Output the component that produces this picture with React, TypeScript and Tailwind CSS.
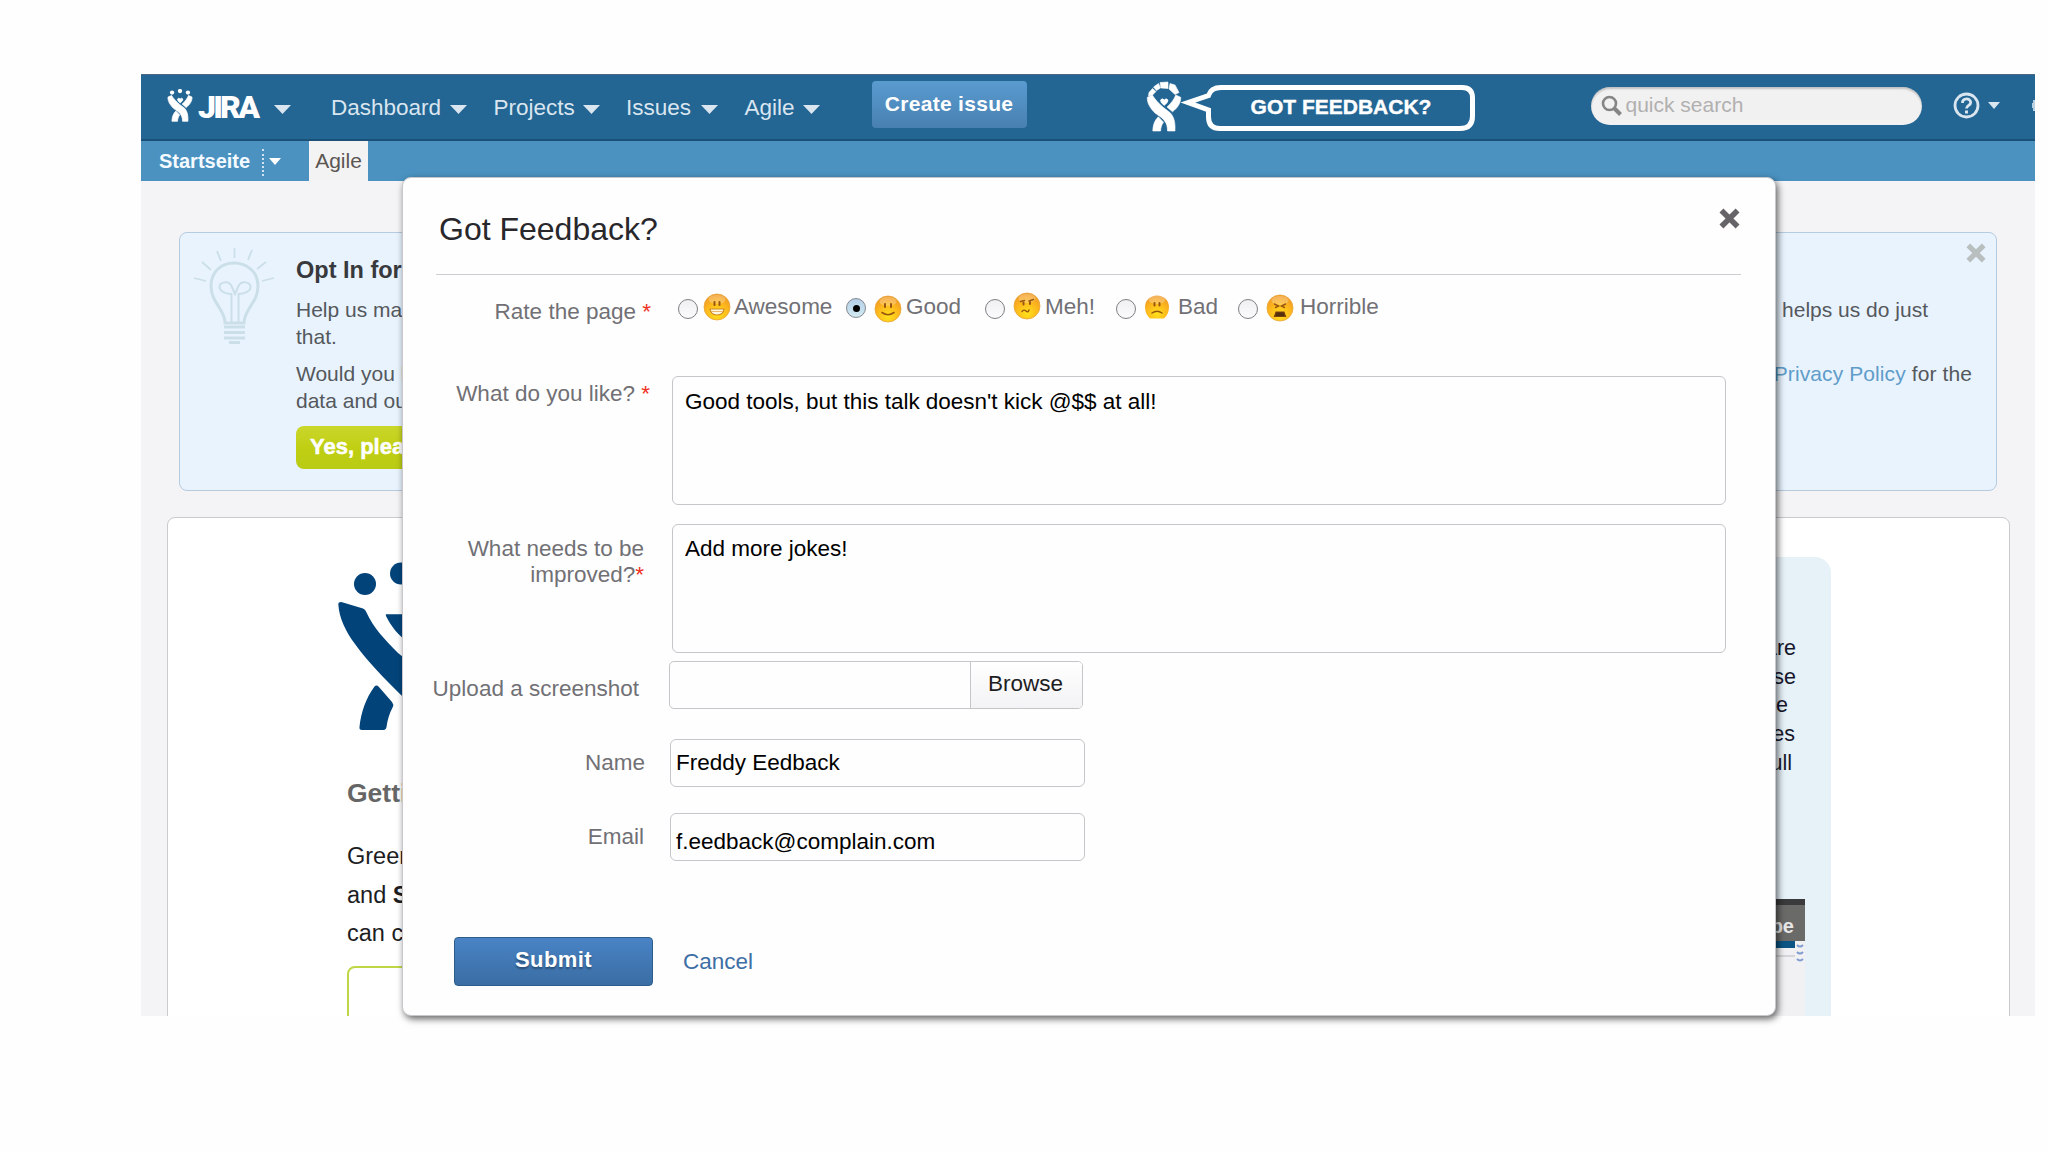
import type { ReactNode } from 'react';
import clsx from 'clsx';

type Mood = 'awesome' | 'good' | 'meh' | 'bad' | 'horrible';

const navItems = [
    { label: 'Dashboard', width: 'w-[119px]' },
    { label: 'Projects', width: 'w-[89px]' },
    { label: 'Issues', width: 'w-[75px]' },
    { label: 'Agile', width: 'w-[58px]' },
];

const ratings: { mood: Mood; label: string; item: string; face: string; text: string }[] = [
    { mood: 'awesome', label: 'Awesome', item: 'w-[168px]', face: 'ml-[5px] mt-0', text: 'ml-[3px]' },
    { mood: 'good', label: 'Good', item: 'w-[139px]', face: 'ml-[8px] mt-[2px]', text: 'ml-[4px]' },
    { mood: 'meh', label: 'Meh!', item: 'w-[131px]', face: 'ml-[8px] -mt-px', text: 'ml-[4px]' },
    { mood: 'bad', label: 'Bad', item: 'w-[122px]', face: 'ml-[7px] mt-0', text: 'ml-[7px]' },
    { mood: 'horrible', label: 'Horrible', item: 'w-[160px]', face: 'ml-[8px] mt-px', text: 'ml-[6px]' },
];

function Caret({ className }: { className?: string }) {
    return (
        <svg viewBox="0 0 18 9" preserveAspectRatio="none" className={clsx('shrink-0', className)}>
            <path d="M0 0h18L9 9z" fill="currentColor" />
        </svg>
    );
}

function Cross({ className }: { className?: string }) {
    return (
        <svg viewBox="0 0 20 20" className={clsx('shrink-0', className)}>
            <path d="M3 3l14 14M17 3L3 17" stroke="currentColor" strokeWidth="4.8" fill="none" />
        </svg>
    );
}

// Arms and legs shared by the logo and the speech bubble figure
function FigureBody() {
    return (
        <>
            <path d="M14.500 20q2-2.500 3.700 0 1.800-2.500 3.800 0 .3 2.600-3.800 5.400-4-2.800-3.700-5.400z" />
            <path d="M1.300 17.300L6.300 15C9 19.500 13 23.800 17.800 27.800L24.500 33C28.500 38 29.300 43 29 51H21.500C21.500 45 20 42 16 38L9 33C4 28 1 23 1.300 17.300z" />
            <path d="M34.700 17.300L29.800 15C28 19.500 25 23.500 21 27L26.500 31.800C32 27.500 35 22.500 34.700 17.300z" />
            <path d="M12.300 36.800L17.500 42.200C15.500 45 14.800 47.500 14.600 51H6.800C7 45 8.500 40.500 12.300 36.800z" />
        </>
    );
}

function JiraMark() {
    return (
        <svg viewBox="0 6 36 46" preserveAspectRatio="none" className="h-[33px] w-[26px] shrink-0" fill="currentColor">
            <circle cx="7" cy="11" r="3" />
            <circle cx="18" cy="8.800" r="3" />
            <circle cx="29" cy="11" r="3" />
            <g stroke="currentColor" strokeWidth="1">
                <FigureBody />
            </g>
        </svg>
    );
}

function FeedbackMark() {
    return (
        <svg viewBox="0 0 330 52" className="h-[52px] w-[330px] shrink-0">
            <g fill="#fff" stroke="#fff" strokeWidth="0.600">
                <path d="M3 12.500l3.500-4 3.500 3-3.500 3.500-4 1zM7.500 7l5-3.500 2 4.500-4 2.500zM14 2.500l8-.5v6.500l-7-.5zM24 3.500l5 1.500 4 7.500-4 2-6-5.500z" />
                <FigureBody />
            </g>
            <path
                d="M75 7.500H316Q326.500 7.500 326.500 18V36Q326.500 48.500 314 48.500H74Q62.500 48.500 62.500 37V30L42 22.500 62.500 15.500Q65 7.500 75 7.500z"
                fill="none"
                stroke="#fff"
                strokeWidth="5"
            />
            <text
                x="195"
                y="34"
                textAnchor="middle"
                fill="#fff"
                stroke="#fff"
                strokeWidth="0.400"
                fontFamily="Liberation Sans, Arial, sans-serif"
                fontSize="21"
                fontWeight="700"
            >
                GOT FEEDBACK?
            </text>
        </svg>
    );
}

function Bulb() {
    return (
        <svg viewBox="0 0 84 100" className="h-[100px] w-[84px] shrink-0" fill="none" stroke="#cbdfe8">
            <path
                d="M1 31l12 3M9 15l9 8M24 4l4 10M41.500 1v10M59 3l-4 10M73 15l-9 7M81 31l-12 3"
                strokeWidth="1.800"
            />
            <path
                d="M32 76c0-14-14-20-14-37 0-14 10-23 23-23s24 9 24 23c0 17-14 23-14 37z"
                strokeWidth="3"
            />
            <path
                d="M38.500 75V47c-4 0-12-2-12-7s9-7 12-1l3.500 8 3.500-8c3-6 12-4 12 1s-8 7-12 7v28"
                strokeWidth="2"
            />
            <path d="M31 80h21M31 85.500h21M31 91h21M36 95.500h11" strokeWidth="3" />
        </svg>
    );
}

function WelcomeFigure() {
    return (
        <svg viewBox="0 0 140 174" className="h-[174px] w-[140px]" fill="#02447a">
            <circle cx="27" cy="24" r="11" />
            <circle cx="63" cy="13.500" r="11" />
            <path d="M48 54.300h45L72 83C60 76 53 66 48 56q-.5-1.500 0-1.700z" />
            <path d="M.3 44q0-2 3-2L25 48.500q2.500 1 3.500 4C35 67 46 79 60 93l20 16v42L62 134C46 118 30 102 17 84 8 72 1 58 .3 44z" />
            <path d="M36.500 126.500q2-2 4 0L54 142q2 2.500 .8 5-4.800 9-6.300 20-.5 3-3 3H24q-3 0-2.500-3c1.500-15 6.500-29 15-40.500z" />
        </svg>
    );
}

function Face({ mood, className }: { mood: Mood; className?: string }) {
    return (
        <svg viewBox="0 0 28 28" className={clsx('h-7 w-7 shrink-0', className)}>
            <defs>
                <radialGradient id={`face-${mood}`} cx="50%" cy="78%" r="78%">
                    <stop offset="0" stopColor="#ffe21c" />
                    <stop offset="0.55" stopColor="#fdb81d" />
                    <stop offset="1" stopColor="#ef9526" />
                </radialGradient>
            </defs>
            {mood === 'bad' ? (
                <path d="M14 2.500c7 0 12 5 12 11.500 0 5-2 9-5 11.500H7C4 23 2 19 2 14 2 7.500 7 2.500 14 2.500z" fill="url(#face-bad)" />
            ) : (
                <circle cx="14" cy="14" r="13" fill={`url(#face-${mood})`} stroke="#e9a637" strokeWidth="0.800" />
            )}
            <ellipse cx="14" cy="6.500" rx="8.500" ry="4.500" fill="#fff" opacity="0.250" />
            <g stroke="#98560f" strokeWidth="2" strokeLinecap="round" fill="none">
                {mood === 'awesome' && (
                    <>
                        <path d="M11.500 9v3M16.500 9v3" />
                        <path d="M7 16h14c-.5 8-13.500 8-14 0z" fill="#fff6e0" stroke="#d08a20" strokeWidth="1.200" />
                        <path d="M8.500 18.500h11" stroke="#e0a850" strokeWidth="0.800" />
                    </>
                )}
                {mood === 'good' && (
                    <>
                        <path d="M11 9v3M17 9v3" />
                        <path d="M8 17.500q6 4.500 12 0" strokeWidth="1.600" />
                    </>
                )}
                {mood === 'meh' && (
                    <>
                        <path d="M10.500 10.500v2M17 10v2" />
                        <path d="M7.500 9.500l4-1M16 9l4.500-1.500M9 19.500q2-2.500 4-.5t3-1" strokeWidth="1.400" />
                    </>
                )}
                {mood === 'bad' && (
                    <>
                        <path d="M11.500 10v2.500M16.500 10v2.500" />
                        <path d="M9 20q5-3.500 10 0" strokeWidth="1.500" />
                    </>
                )}
                {mood === 'horrible' && (
                    <>
                        <path d="M8.500 10l4 2-3 1.500M19.500 10l-4 2 3 1.500" strokeWidth="1.400" />
                        <path d="M10 18h8l1.500 4.500h-11z" fill="#55300c" stroke="#7a430c" strokeWidth="1.200" />
                    </>
                )}
            </g>
        </svg>
    );
}

function Radio({ checked }: { checked?: boolean }) {
    return (
        <span
            className={clsx(
                'mt-[6px] flex h-5 w-5 shrink-0 items-center justify-center rounded-full border',
                checked
                    ? '-translate-y-px border-[#84878f] bg-linear-to-b from-[#b4cfe8] to-[#d3eaf2]'
                    : 'border-[#7e7d82] bg-linear-to-b from-[#f0eff1] to-[#fbfafc]'
            )}
        >
            {checked && <span className="h-[7px] w-[7px] rounded-full bg-black" />}
        </span>
    );
}

function Label({ children, className }: { children: ReactNode; className?: string }) {
    return <div className={clsx('w-[269px] shrink-0 text-right text-[#717075]', className)}>{children}</div>;
}

function Required() {
    return <span className="text-[#f0311f]">*</span>;
}

function Header() {
    return (
        <header className="flex h-[67px] items-start border-t border-b-2 border-t-[#4d6685] border-b-[#1b5078] bg-[#236593] text-[22.5px] leading-7 text-[#d9e6f0]">
            <div className="mt-[14px] ml-[26px] flex text-white">
                <JiraMark />
                <span className="mt-[2px] ml-[5px] w-[66px] font-[Roboto] text-[32px] leading-8 font-black tracking-[-2.8px]">
                    JIRA
                </span>
            </div>
            <Caret className="mt-[30px] ml-[10px] h-[9px] w-[17px]" />
            <nav className="mt-[19px] ml-[40px] flex gap-[26.5px]">
                {navItems.map(item => (
                    <div key={item.label} className="flex">
                        <span className={item.width}>{item.label}</span>
                        <Caret className="mt-[11px] h-[9px] w-[17px]" />
                    </div>
                ))}
            </nav>
            <button className="mt-[6px] ml-[52px] h-[47px] w-[155px] shrink-0 rounded bg-linear-to-b from-[#5a9bd0] to-[#4880b1] pb-[2px] text-[21px] font-bold tracking-[0.3px] text-white">
                Create issue
            </button>
            <div className="mt-[5px] ml-[119px]">
                <FeedbackMark />
            </div>
            <div className="mt-[12px] ml-[115px] flex h-[38px] w-[331px] shrink-0 items-start rounded-full bg-[#f2f1f1] shadow-[inset_0_2px_2px_rgba(0,0,0,0.2)]">
                <svg viewBox="0 0 22 22" className="mt-[8px] ml-[10px] h-[22px] w-[22px]" fill="none" stroke="#858585">
                    <circle cx="8.500" cy="8.500" r="6.500" strokeWidth="2.600" />
                    <path d="M13.500 13.500l6 6" strokeWidth="4" />
                </svg>
                <span className="mt-[4px] ml-[3px] text-[21px] text-[#b1b0b0]">quick search</span>
            </div>
            <svg viewBox="0 0 27 27" className="mt-[17px] ml-[31px] h-[27px] w-[27px] shrink-0" fill="none" stroke="currentColor">
                <circle cx="13.500" cy="13.500" r="11.500" strokeWidth="2.800" />
                <path d="M9.500 11c0-5.500 8.200-5.200 8.200-.6 0 3-4.200 3-4.200 6.200" strokeWidth="2.800" />
                <path d="M13.500 18.500v3" strokeWidth="3" />
            </svg>
            <Caret className="mt-[27px] ml-[8px] h-[7px] w-[12px]" />
            <div className="mt-[25px] ml-auto flex items-center">
                <span className="h-[5px] w-px bg-[#b8d0e4]" />
                <span className="h-[11px] w-[2px] bg-[#b8d0e4]" />
            </div>
        </header>
    );
}

function SubNav() {
    return (
        <div className="flex h-10 items-start bg-[#4b92c1] leading-7">
            <span className="mt-[6px] ml-[18px] w-[103px] text-[20px] font-bold text-[#f4faff]">Startseite</span>
            <span className="mt-[8px] h-[27px] border-l-2 border-dotted border-[#cfe3f0]" />
            <Caret className="mt-[17px] ml-[5px] h-[7px] w-[12px] text-white" />
            <span className="ml-[28px] h-10 w-[59px] bg-[#f4f3f4] pt-[6px] text-center text-[21px] text-[#5b5652]">Agile</span>
        </div>
    );
}

function Notice() {
    return (
        <section className="mt-[51px] ml-[38px] flex h-[259px] w-[1818px] rounded-lg border border-[#b5cbdf] bg-[#e8f3fe] text-[21px] leading-7 text-[#55585c]">
            <div className="mt-[14px] ml-[13px]">
                <Bulb />
            </div>
            <div className="ml-[19px] grow">
                <div className="flex justify-between">
                    <h2 className="mt-[23px] text-[23.5px] leading-7 font-bold text-[#38393c]">Opt In for</h2>
                    <Cross className="mt-[9px] mr-[9px] h-[22px] w-[22px] text-[#b9bfbf]" />
                </div>
                <div className="mt-[12px] flex justify-between">
                    <span>Help us ma</span>
                    <span className="mr-[68px]">helps us do just</span>
                </div>
                <div className="-mt-px">that.</div>
                <div className="mt-[9px] flex justify-between">
                    <span>Would you l</span>
                    <span className="mr-[24px] tracking-[0.1px]">
                        <a className="text-[#5f9cc9]">Privacy Policy</a> for the
                    </span>
                </div>
                <div className="-mt-px">data and ou</div>
                <button className="mt-[11px] h-[43px] w-[140px] rounded-lg bg-linear-to-b from-[#cbd62a] via-[#c0cf12] to-[#b9cb14] pb-[2px] pl-[14px] text-left text-[22px] font-bold text-white [-webkit-text-stroke:0.5px_white]">
                    Yes, plea
                </button>
            </div>
        </section>
    );
}

function VideoThumb() {
    return (
        <div className="mt-auto ml-[10px] h-[117px] w-[54px] border-t-[6px] border-[#3a3a3c] bg-[#f1f1f4]">
            <div className="h-9 bg-[#6a6a69] pt-[7px] pr-[11px] text-right text-[20px] leading-7 font-bold text-[#e8e8e8]">be</div>
            <div className="flex">
                <div className="h-[7px] w-[44px] bg-[#0b5484]" />
                <svg viewBox="0 0 10 22" className="h-[22px] w-[10px]" fill="none" stroke="#7f9bd0" strokeWidth="2">
                    <path d="M2 4q3 3 6 0M2 11q3 3 6 0M2 18q3 3 6 0" />
                </svg>
            </div>
            <div className="mt-[-8px] h-[2px] w-[44px] bg-[#d5d5da]" />
        </div>
    );
}

function Welcome() {
    return (
        <section className="mt-[26px] ml-[26px] flex h-[520px] w-[1843px] shrink-0 justify-between rounded-lg border border-[#cbc9cd] bg-white">
            <div className="ml-[170px] w-[240px]">
                <div className="mt-[42px] h-[174px]">
                    <WelcomeFigure />
                </div>
                <div className="ml-[9px] w-[200px]">
                    <h2 className="mt-[43px] text-[26.5px] leading-8 font-bold text-[#666]">Getti</h2>
                    <p className="mt-[28px] text-[23.5px] leading-[38.500px] text-[#1d1d1f]">
                        Green
                        <br />
                        and <b>S</b>
                        <br />
                        can c
                    </p>
                    <div className="mt-[13px] h-[70px] rounded-lg border-2 border-[#c0d745]" />
                </div>
            </div>
            <aside className="mt-[39px] mr-[178px] flex h-[459px] w-[90px] flex-col rounded-tr-2xl bg-[#e6f1f8] text-[21.5px] leading-[28.700px] text-[#17172c]">
                <div className="mt-[77px] flex flex-col items-end">
                    <span className="mr-[35px]">are</span>
                    <span className="mr-[35px]">se</span>
                    <span className="mr-[43px]">re</span>
                    <span className="mr-[36px]">es</span>
                    <span className="mr-[39px]">ull</span>
                </div>
                <VideoThumb />
            </aside>
        </section>
    );
}

function FeedbackDialog() {
    return (
        <div className="absolute top-[103px] left-[261px] h-[839px] w-[1374px] rounded-[9px] border border-[#c9c7cb] bg-[#fefefe] text-[22.5px] leading-7 text-black shadow-[2px_3px_7px_rgba(0,0,0,0.6)]">
            <div className="mx-[33px] flex h-[97px] w-[1305px] items-start justify-between border-b border-[#cfcdd1]">
                <h1 className="mt-[33px] ml-[3px] text-[32px] leading-9 text-[#28272b]">Got Feedback?</h1>
                <Cross className="mt-[29px] h-[23px] w-[23px] text-[#666469]" />
            </div>

            <div className="mt-[18px] flex h-7">
                <Label className="pt-[5px] pr-[21px]">
                    Rate the page <Required />
                </Label>
                <div className="ml-[6px] flex text-[#717075]">
                    {ratings.map(r => (
                        <label key={r.mood} className={clsx('flex items-start', r.item)}>
                            <Radio checked={r.mood === 'good'} />
                            <Face mood={r.mood} className={r.face} />
                            <span className={r.text}>{r.label}</span>
                        </label>
                    ))}
                </div>
            </div>

            <div className="mt-[55px] flex">
                <Label className="pt-[4px] pr-[22px]">
                    What do you like? <Required />
                </Label>
                <div className="h-[129px] w-[1054px] rounded-md border-[1.5px] border-[#c6c5ca] pt-[11px] pl-[12px] tracking-[-0.02px]">
                    Good tools, but this talk doesn't kick @$$ at all!
                </div>
            </div>

            <div className="mt-[19px] flex">
                <Label className="pt-[12px] pr-[28px] leading-[25.5px]">
                    What needs to be
                    <br />
                    improved?
                    <Required />
                </Label>
                <div className="h-[129px] w-[1054px] rounded-md border-[1.5px] border-[#c6c5ca] pt-[10px] pl-[12px]">
                    Add more jokes!
                </div>
            </div>

            <div className="mt-[8px] flex">
                <Label className="pt-[14px] pr-[33px]">Upload a screenshot</Label>
                <div className="-ml-[3px] flex h-12 w-[414px] overflow-hidden rounded-[5px] border-[1.5px] border-[#c6c5ca]">
                    <div className="grow" />
                    <button className="w-[112px] border-l border-[#c6c5ca] bg-linear-to-b from-white to-[#f3f2f4] pr-[2px] pb-[3px] text-[#1d1d1f]">
                        Browse
                    </button>
                </div>
            </div>

            <div className="mt-[30px] flex">
                <Label className="pt-[10px] pr-[27px]">Name</Label>
                <div className="-ml-[2px] h-12 w-[415px] rounded-md border-[1.5px] border-[#c6c5ca] pt-[9px] pl-[5px]">
                    Freddy Eedback
                </div>
            </div>

            <div className="mt-[26px] flex">
                <Label className="pt-[10px] pr-[28px]">Email</Label>
                <div className="-ml-[2px] h-12 w-[415px] rounded-md border-[1.5px] border-[#c6c5ca] pt-[14px] pl-[5px]">
                    f.eedback@complain.com
                </div>
            </div>

            <div className="mt-[76px] flex">
                <button className="ml-[51px] h-[49px] w-[199px] rounded border-[1.5px] border-[#2c5c87] bg-linear-to-b from-[#4984c6] to-[#3a6da3] pb-[4px] text-[22px] font-bold tracking-[0.4px] text-white [text-shadow:0_2px_2px_rgba(0,0,0,0.35)]">
                    Submit
                </button>
                <a className="mt-[11px] ml-[30px] text-[22.5px] text-[#3d6ea5]">Cancel</a>
            </div>
        </div>
    );
}

export default function App() {
    return (
        <div className="h-[1152px] w-[2048px] overflow-hidden bg-[#fefefe] pt-[74px] pl-[141px] font-['Liberation_Sans',Arial,sans-serif]">
            <div className="relative w-[1894px]">
                <div className="h-[942px] overflow-hidden bg-[#f4f3f5]">
                    <Header />
                    <SubNav />
                    <Notice />
                    <Welcome />
                </div>
                <FeedbackDialog />
            </div>
        </div>
    );
}
